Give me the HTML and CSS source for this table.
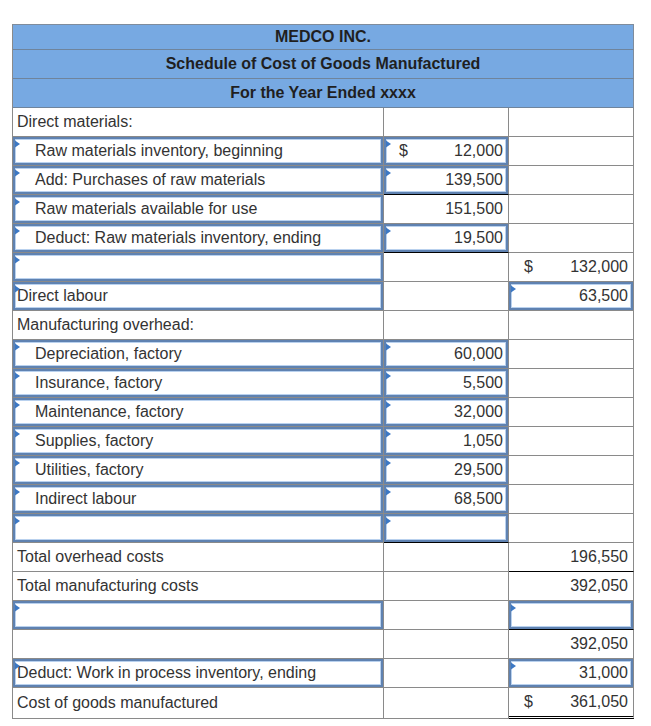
FILE: index.html
```html
<!DOCTYPE html>
<html>
<head>
<meta charset="utf-8">
<title>Schedule of Cost of Goods Manufactured</title>
<link rel="stylesheet" href="styles.css">
</head>
<body>
<table class="sheet">
  <colgroup><col class="c1"><col class="c2"><col class="c3"></colgroup>
  <thead>
    <tr class="h1"><th colspan="3">MEDCO INC.</th></tr>
    <tr><th colspan="3">Schedule of Cost of Goods Manufactured</th></tr>
    <tr><th colspan="3">For the Year Ended xxxx</th></tr>
  </thead>
  <tbody>
    <tr><td class="lbl">Direct materials:</td><td></td><td></td></tr>
    <tr>
      <td class="in"><div class="box ind">Raw materials inventory, beginning</div></td>
      <td class="in"><div class="box num"><span class="cur">$</span><span>12,000</span></div></td>
      <td></td>
    </tr>
    <tr>
      <td class="in"><div class="box ind">Add: Purchases of raw materials</div></td>
      <td class="in ul"><div class="box num"><span>139,500</span></div></td>
      <td></td>
    </tr>
    <tr>
      <td class="in"><div class="box ind">Raw materials available for use</div></td>
      <td class="num"><span>151,500</span></td>
      <td></td>
    </tr>
    <tr>
      <td class="in"><div class="box ind">Deduct: Raw materials inventory, ending</div></td>
      <td class="in ul"><div class="box num"><span>19,500</span></div></td>
      <td></td>
    </tr>
    <tr>
      <td class="in"><div class="box"></div></td>
      <td></td>
      <td class="num"><span class="cur">$</span><span>132,000</span></td>
    </tr>
    <tr>
      <td class="in"><div class="box">Direct labour</div></td>
      <td></td>
      <td class="in"><div class="box num"><span>63,500</span></div></td>
    </tr>
    <tr><td class="lbl">Manufacturing overhead:</td><td></td><td></td></tr>
    <tr>
      <td class="in"><div class="box ind">Depreciation, factory</div></td>
      <td class="in"><div class="box num"><span>60,000</span></div></td>
      <td></td>
    </tr>
    <tr>
      <td class="in"><div class="box ind">Insurance, factory</div></td>
      <td class="in"><div class="box num"><span>5,500</span></div></td>
      <td></td>
    </tr>
    <tr>
      <td class="in"><div class="box ind">Maintenance, factory</div></td>
      <td class="in"><div class="box num"><span>32,000</span></div></td>
      <td></td>
    </tr>
    <tr>
      <td class="in"><div class="box ind">Supplies, factory</div></td>
      <td class="in"><div class="box num"><span>1,050</span></div></td>
      <td></td>
    </tr>
    <tr>
      <td class="in"><div class="box ind">Utilities, factory</div></td>
      <td class="in"><div class="box num"><span>29,500</span></div></td>
      <td></td>
    </tr>
    <tr>
      <td class="in"><div class="box ind">Indirect labour</div></td>
      <td class="in"><div class="box num"><span>68,500</span></div></td>
      <td></td>
    </tr>
    <tr>
      <td class="in"><div class="box"></div></td>
      <td class="in ul"><div class="box"></div></td>
      <td></td>
    </tr>
    <tr>
      <td class="lbl">Total overhead costs</td>
      <td></td>
      <td class="num ul"><span>196,550</span></td>
    </tr>
    <tr>
      <td class="lbl">Total manufacturing costs</td>
      <td></td>
      <td class="num"><span>392,050</span></td>
    </tr>
    <tr>
      <td class="in"><div class="box"></div></td>
      <td></td>
      <td class="in ul"><div class="box"></div></td>
    </tr>
    <tr>
      <td></td>
      <td></td>
      <td class="num"><span>392,050</span></td>
    </tr>
    <tr>
      <td class="in"><div class="box">Deduct: Work in process inventory, ending</div></td>
      <td></td>
      <td class="in"><div class="box num"><span>31,000</span></div></td>
    </tr>
    <tr>
      <td class="lbl">Cost of goods manufactured</td>
      <td></td>
      <td class="num dbl"><span class="cur">$</span><span>361,050</span></td>
    </tr>
  </tbody>
</table>
</body>
</html>
```

FILE: styles.css
```css
html, body {
  margin: 0;
  background: #ffffff;
}

body {
  padding: 24px 0 0 12px;
  font-family: "Liberation Sans", Arial, sans-serif;
  font-size: 16px;
  color: #333333;
}

.sheet {
  border-collapse: separate;
  border-spacing: 0;
  table-layout: fixed;
  width: 622px;
  border-top: 1px solid #7f8c9c;
  border-left: 1px solid #8a8a8a;
}

.c1 { width: 371px; }
.c2 { width: 125px; }
.c3 { width: 125px; }

.sheet th {
  background: #77a9e2;
  color: #1f1f1f;
  font-weight: bold;
  font-size: 16px;
  text-align: center;
  height: 28px;
  padding: 0;
  border-right: 1px solid #7f8c9c;
  border-bottom: 1px solid #6f849c;
}

.sheet .h1 th {
  height: 24px;
}

.sheet td {
  height: 28px;
  padding: 0;
  border-right: 1px solid #8a8a8a;
  border-bottom: 1px solid #8a8a8a;
  vertical-align: middle;
  white-space: nowrap;
}

.sheet td.lbl {
  padding-left: 4px;
}

.sheet td.num {
  padding: 0 5px 0 15px;
}

.sheet td.num,
.box.num {
  display: table-cell;
}

td.num span,
.box.num span {
  display: inline-block;
}

td.num,
.box.num {
  text-align: right;
}

.cur {
  float: left;
}

.sheet td.ul {
  border-bottom-color: #000000;
}

.sheet td.dbl {
  border-bottom: 3px double #000000;
}

.box {
  position: relative;
  box-sizing: border-box;
  height: 28px;
  line-height: 24px;
  border: 2px solid #5f82b1;
  box-shadow: inset 0 0 0 1px #b9d1ee;
  padding: 0 3px 0 2px;
  overflow: hidden;
}

.box.ind {
  padding-left: 20px;
}

.box.num {
  display: block;
  padding: 0 3px 0 13px;
}

.box::before {
  content: "";
  position: absolute;
  top: 0;
  left: -2px;
  width: 0;
  height: 0;
  border-top: 5px solid transparent;
  border-bottom: 5px solid transparent;
  border-left: 7px solid #3c78c4;
}
```
